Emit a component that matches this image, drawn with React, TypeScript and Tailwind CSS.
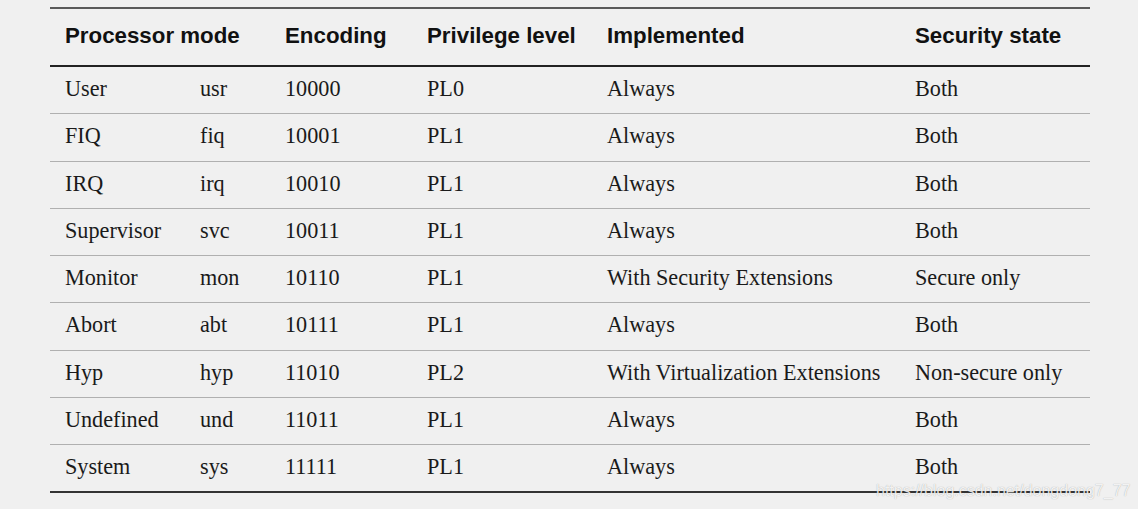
const rows = [
  ["User", "usr", "10000", "PL0", "Always", "Both"],
  ["FIQ", "fiq", "10001", "PL1", "Always", "Both"],
  ["IRQ", "irq", "10010", "PL1", "Always", "Both"],
  ["Supervisor", "svc", "10011", "PL1", "Always", "Both"],
  ["Monitor", "mon", "10110", "PL1", "With Security Extensions", "Secure only"],
  ["Abort", "abt", "10111", "PL1", "Always", "Both"],
  ["Hyp", "hyp", "11010", "PL2", "With Virtualization Extensions", "Non-secure only"],
  ["Undefined", "und", "11011", "PL1", "Always", "Both"],
  ["System", "sys", "11111", "PL1", "Always", "Both"],
];

const cols = "grid grid-cols-[135px_85px_142px_180px_308px_190px]";

export default function App() {
  return (
    <div className="relative w-[1138px] h-[509px] bg-[#f0f0f0] pt-[7px] pl-[50px] overflow-hidden">
      <div className="w-[1040px] border-t-2 border-[#5a5a5a]">
        <div
          className={`${cols} h-[58px] pb-[2px] items-center border-b-2 border-[#222] text-[22.3px] font-bold text-[#111] font-['Liberation_Sans',Arial,sans-serif]`}
        >
          <div className="col-span-2 pl-[15px]">Processor mode</div>
          <div className="pl-[15px]">Encoding</div>
          <div className="pl-[15px]">Privilege level</div>
          <div className="pl-[15px]">Implemented</div>
          <div className="pl-[15px]">Security state</div>
        </div>
        {rows.map((r, i) => (
          <div
            key={i}
            className={`${cols} h-[47.3px] pb-[3px] items-center text-[22.2px] text-[#1a1a1a] font-['Liberation_Serif','Times_New_Roman',serif] ${
              i === rows.length - 1 ? "border-b-2 border-[#333]" : "border-b border-[#b0b0b0]"
            }`}
          >
            {r.map((c, j) => (
              <div key={j} className="pl-[15px] whitespace-nowrap">
                {c}
              </div>
            ))}
          </div>
        ))}
      </div>
      <div className="absolute left-[876px] top-[479px] text-[16px] text-white/85 font-['Liberation_Sans',Arial,sans-serif] [text-shadow:0_0_1px_rgba(0,0,0,0.35)]">
        https://blog.csdn.net/dongdong7_77
      </div>
    </div>
  );
}
